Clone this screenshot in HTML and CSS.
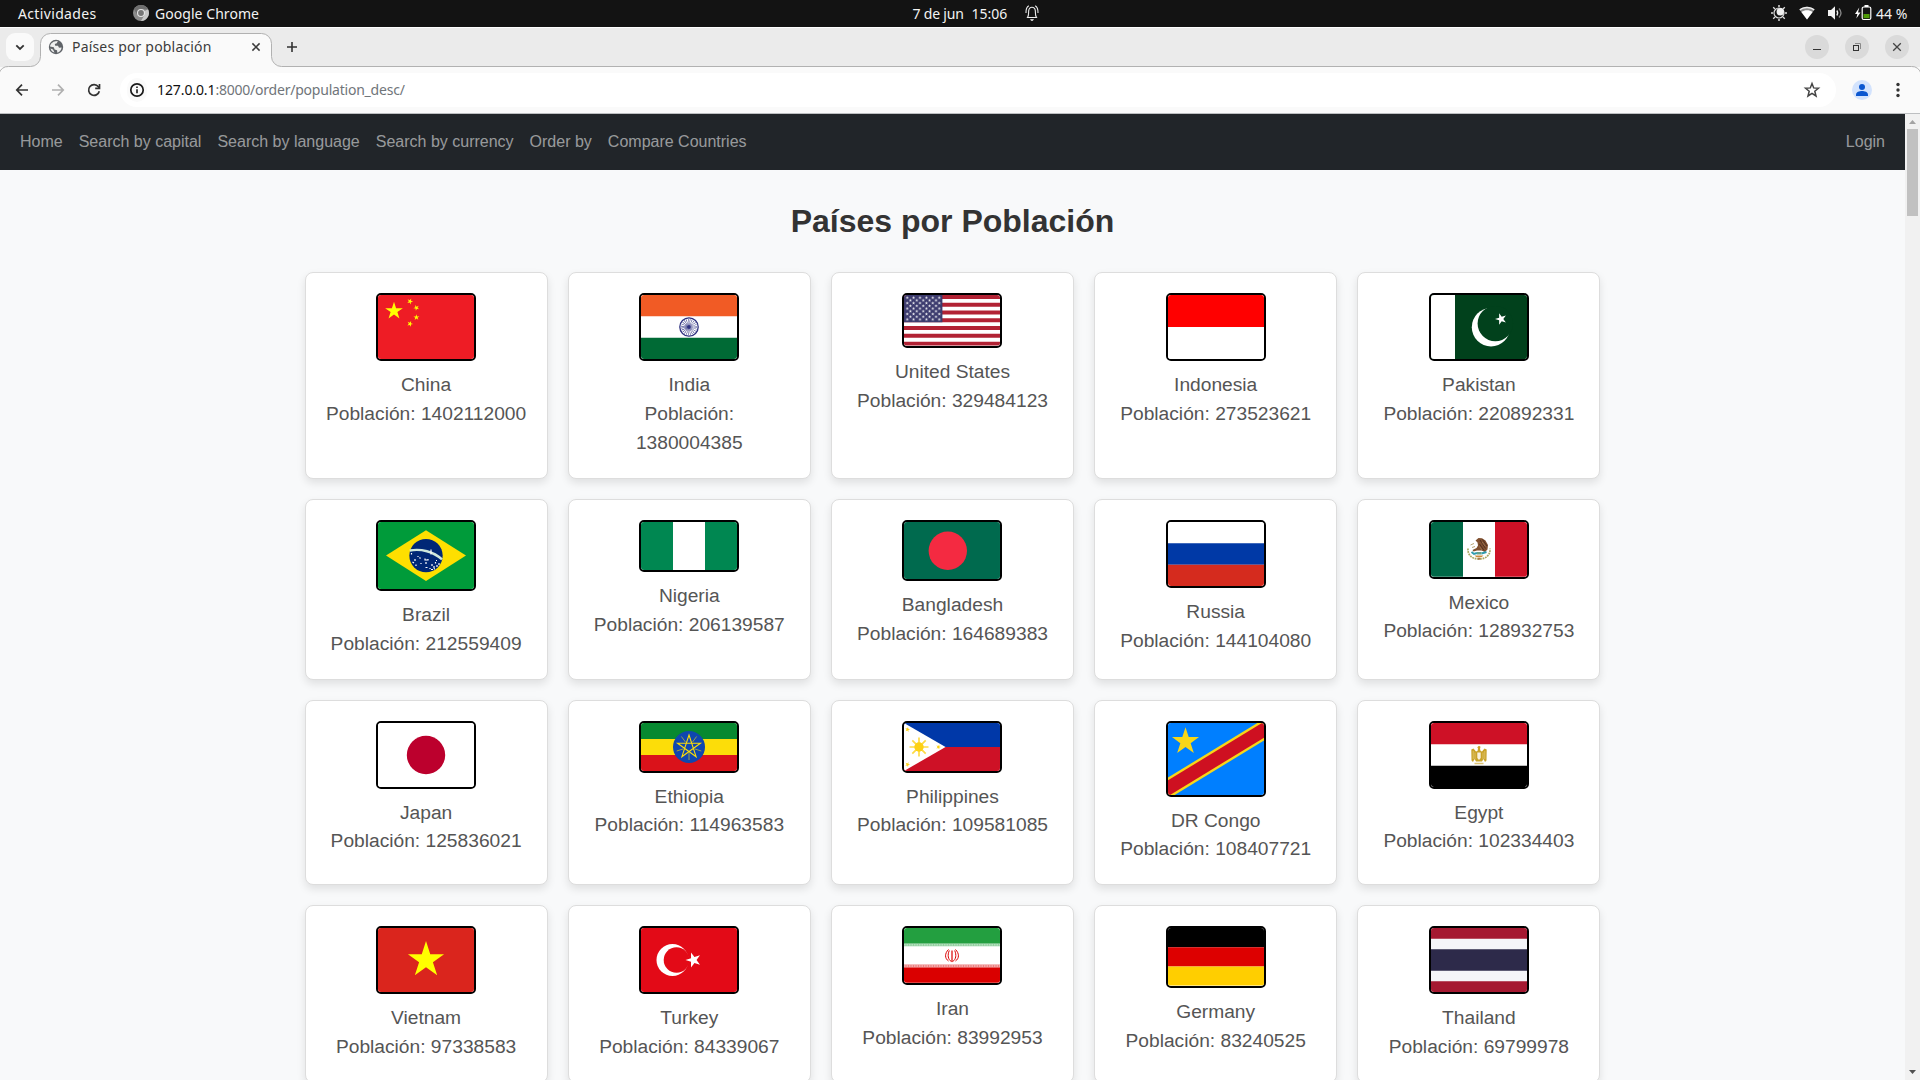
FILE: index.html
```html
<!DOCTYPE html>
<html lang="es">
<head>
<meta charset="utf-8">
<title>Países por población</title>
<link rel="stylesheet" href="styles.css">
</head>
<body>
<svg class="defs" width="0" height="0" aria-hidden="true">
  <defs>
    <polygon id="star" points="0,-10 2.245,-3.09 9.51,-3.09 3.633,1.18 5.878,8.09 0,3.82 -5.878,8.09 -3.633,1.18 -9.51,-3.09 -2.245,-3.09"/>
    <pattern id="usA" width="6.4" height="5.44" patternUnits="userSpaceOnUse"><use href="#star" fill="#fff" transform="translate(3.2 2.72) scale(.17)"/></pattern>
    <pattern id="usB" x="3.2" y="2.72" width="6.4" height="5.44" patternUnits="userSpaceOnUse"><use href="#star" fill="#fff" transform="translate(3.2 2.72) scale(.17)"/></pattern>
  </defs>
</svg>

<header class="topbar">
  <div class="topbar-left">
    <span class="t-act">Actividades</span>
    <svg class="chrome-icon" width="16" height="16" viewBox="0 0 16 16"><circle cx="8" cy="8" r="8" fill="#8c8c8c"/><path d="M8 8 15 4.200A8 8 0 0 1 8 16L11.500 10Z" fill="#c9c9c9"/><path d="M1 4.200A8 8 0 0 1 15 4.200H8L4.500 10Z" fill="#6f6f6f"/><circle cx="8" cy="8" r="4" fill="#e6e6e6"/><circle cx="8" cy="8" r="2.900" fill="#777"/></svg>
    <span class="t-app">Google Chrome</span>
  </div>
  <div class="topbar-mid">
    <span class="t-date">7 de jun</span><span class="t-time">15:06</span>
    <svg class="bell" width="14" height="16" viewBox="0 0 14 16" fill="none" stroke="#eee" stroke-width="1.100"><path d="M2.500 12.500C4 10.500 3.400 8 3.700 5.600 4 3.500 5.300 2.300 7 2.300S10 3.500 10.300 5.600C10.600 8 10 10.500 11.500 12.500Z"/><path d="M1 8C.8 4.500 1.800 2 3.800.7M13 8C13.200 4.500 12.200 2 10.200.7"/><path d="M5 14.200H9L7.800 15.700H6.200Z" fill="#fff" stroke="none"/></svg>
  </div>
  <div class="topbar-right">
    <svg width="16" height="16" viewBox="0 0 16 16"><circle cx="8" cy="8" r="5" fill="none" stroke="#ddd" stroke-width="1.200"/><circle cx="9.300" cy="6.700" r="3.700" fill="#f0f0f0"/><g fill="#aaa"><path d="M7 0h2v2H7zM7 14h2v2H7zM0 7h2v2H0zM14 7h2v2h-2z"/></g><path d="M2.200 2.200 4 4M12 12l1.800 1.800M13.800 2.200 12 4M4 12 2.200 13.800" stroke="#ddd" stroke-width="1.300"/></svg>
    <svg class="wifi" width="16" height="16" viewBox="0 0 16 16"><path d="M.4 4.500C4.800.9 11.200.9 15.600 4.500L8 14.500Z" fill="#8a8a8a"/><path d="M.4 4.500C4.800.9 11.200.9 15.600 4.500L14.800 5.600C10.800 2.500 5.200 2.500 1.200 5.600Z" fill="#eee"/><path d="M2.400 7C5.700 4.700 10.300 4.700 13.600 7L8 14.500Z" fill="#fff"/></svg>
    <svg class="vol" width="16" height="16" viewBox="0 0 16 16"><path d="M1 5h3l4-3.800v13.600L4 11H1z" fill="#f2f2f2"/><path d="M9.800 5.500Q11.600 8 9.800 10.500" stroke="#eee" fill="none" stroke-width="1.300"/><path d="M12 3.500Q16 8 12 12.500" stroke="#888" fill="none" stroke-width="1.300"/></svg>
    <svg class="batt" width="18" height="16" viewBox="0 0 18 16"><path d="M4.300 2.500 0 9h2.400L1.300 13.500 5.500 7.500H3z" fill="#fff"/><path d="M9.500 0h4v2h-4z" fill="#fff"/><rect x="7.200" y="2" width="8.600" height="12.500" rx="1.500" fill="none" stroke="#fff" stroke-width="1.200"/><rect x="8.500" y="9" width="6" height="4.200" fill="#4e9a06"/></svg>
    <span class="t-batt">44 %</span>
  </div>
</header>

<div class="tabstrip">
  <svg class="tab-outline" width="1920" height="50" viewBox="0 0 1920 50"><path d="M-1 52V47A9 9 0 0 1 8.500 39.500H30.500A10 10 0 0 0 40.500 29.500V16.500A10 10 0 0 1 50.500 6.500H261.500A10 10 0 0 1 271.500 16.500V29.500A10 10 0 0 0 281.500 39.500H1911.500A9 9 0 0 1 1921 47V52Z" fill="#fafafa" stroke="#b1b1b1"/></svg>
  <div class="tab-search"><svg width="28" height="28" viewBox="0 0 28 28"><path d="M10.300 12.300 14 16 17.700 12.300" fill="none" stroke="#333" stroke-width="1.800"/></svg></div>
  <div class="tab">
    <svg width="16" height="16" viewBox="0 0 16 16"><circle cx="8" cy="8" r="7.200" fill="#5f6368"/><path d="M7.500 2.200 9.800 2 8.800 4.200 6.800 5 7.200 6.800H10L11 8.800 13.600 8.500C13.500 10.800 11.800 13.300 9.300 13.800L9 11.200 6.600 10.500 5.800 8.300 2 7.500C2.300 5 4.700 2.500 7.500 2.200ZM2.500 9.500 5 10.500 6.500 13.600C4.500 13.200 3 11.500 2.500 9.500Z" fill="#fafafa" fill-opacity=".92"/></svg>
    <span class="t-tab">Países por población</span>
    <svg class="tab-close" width="10" height="10" viewBox="0 0 10 10"><path d="M1.400 1.400 8.600 8.600M8.600 1.400 1.400 8.600" stroke="#3c3c3c" stroke-width="1.500"/></svg>
  </div>
  <svg class="new-tab" width="12" height="12" viewBox="0 0 12 12"><path d="M6 1V11M1 6H11" stroke="#333" stroke-width="1.600"/></svg>
  <div class="winbtns">
    <span class="winbtn"><svg width="24" height="24" viewBox="0 0 24 24"><path d="M8 14.500h8" stroke="#333"/></svg></span>
    <span class="winbtn"><svg width="24" height="24" viewBox="0 0 24 24" fill="none"><path d="M10 8.500H15.500V14" stroke="#8a8a8a"/><rect x="8.500" y="10.500" width="5" height="5" stroke="#333"/></svg></span>
    <span class="winbtn"><svg width="24" height="24" viewBox="0 0 24 24"><path d="M8.200 8.200 15.800 15.800M15.800 8.200 8.200 15.800" stroke="#444" stroke-width="1.300"/></svg></span>
  </div>
</div>

<div class="toolbar">
  <svg class="tb-back" width="14" height="14" viewBox="0 0 14 14" fill="none" stroke="#333" stroke-width="1.700"><path d="M13 7H2M7 1.700 1.800 7 7 12.300"/></svg>
  <svg class="tb-fwd" width="14" height="14" viewBox="0 0 14 14" fill="none" stroke="#b0b0b0" stroke-width="1.700"><path d="M1 7H12M7 1.700 12.200 7 7 12.300"/></svg>
  <svg class="tb-reload" width="14" height="14" viewBox="0 0 14 14" fill="none" stroke="#333" stroke-width="1.700"><path d="M12.300 8.200A5.400 5.400 0 1 1 11.400 3.800L12.300 5"/><path d="M12.500 1V5.300H8.200"/></svg>
  <div class="omnibox">
    <span class="site-info"><svg width="16" height="16" viewBox="0 0 16 16"><circle cx="8" cy="8" r="6.200" fill="none" stroke="#1a1a1a" stroke-width="1.700"/><path d="M8 7.200V11.300" stroke="#1a1a1a" stroke-width="1.600"/><path d="M7.200 4.500h1.600v1.600H7.200z" fill="#1a1a1a"/></svg></span>
    <span class="url"><b>127.0.0.1</b>:8000/order/population_desc/</span>
    <svg class="bookmark" width="18" height="18" viewBox="0 0 18 18"><path d="M9 2.500 10.700 6.900 15.500 7.200 11.800 10.300 13 15 9 12.400 5 15 6.200 10.300 2.500 7.200 7.300 6.900Z" fill="none" stroke="#444" stroke-width="1.500"/></svg>
  </div>
  <svg class="profile" width="20" height="20" viewBox="0 0 20 20"><circle cx="10" cy="10" r="10" fill="#d3e3fd"/><circle cx="10" cy="7" r="3" fill="#0b57d0"/><path d="M4 16V14.500C4 12 7.500 11 10 11S16 12 16 14.500V16Z" fill="#0b57d0"/></svg>
  <svg class="menu-dots" width="4" height="16" viewBox="0 0 4 16" fill="#333"><circle cx="2" cy="2.500" r="1.700"/><circle cx="2" cy="8" r="1.700"/><circle cx="2" cy="13.500" r="1.700"/></svg>
</div>

<div class="viewport">
  <main class="page">
    <nav class="navbar">
      <a>Home</a><a>Search by capital</a><a>Search by language</a><a>Search by currency</a><a>Order by</a><a>Compare Countries</a><a class="login">Login</a>
    </nav>
    <h1>Países por Población</h1>
    <div class="grid">
      <div class="card"><div class="flag"><svg viewBox="0 0 96 64"><path fill="#ee1c25" d="M0 0h96v64H0z"/><g fill="#ff0"><use href="#star" transform="translate(16 16) scale(.93)"/><use href="#star" transform="translate(32 6.400) rotate(23) scale(.31)"/><use href="#star" transform="translate(38.400 12.800) rotate(46) scale(.31)"/><use href="#star" transform="translate(38.400 22.400) rotate(70) scale(.31)"/><use href="#star" transform="translate(32 28.800) rotate(21) scale(.31)"/></g></svg></div><p>China<br>Población: 1402112000</p></div>
      <div class="card"><div class="flag"><svg viewBox="0 0 96 64"><path fill="#fff" d="M0 0h96v64H0z"/><path fill="#f15b25" d="M0 0h96v21.330H0z"/><path fill="#006a35" d="M0 42.670h96V64H0z"/><circle cx="48" cy="32" r="9.200" fill="#fff" stroke="#2e3180" stroke-width="1.300"/><circle cx="48" cy="32" r="4.500" fill="none" stroke="#2e3180" stroke-width="7" stroke-dasharray=".35 .828"/><circle cx="48" cy="32" r="3.800" fill="#2e3180" fill-opacity=".35"/><circle cx="48" cy="32" r="1.900" fill="#2e3180"/></svg></div><p>India<br>Población: 1380004385</p></div>
      <div class="card"><div class="flag"><svg viewBox="0 0 96 50.530"><path fill="#fff" d="M0 0h96v50.530H0z"/><path d="M0 1.940H96M0 9.720H96M0 17.490H96M0 25.260H96M0 33.040H96M0 40.810H96M0 48.590H96" stroke="#b22234" stroke-width="3.887"/><path fill="#3c3b6e" d="M0 0h38.400v27.200H0z"/><path fill="url(#usA)" d="M0 0h38.400v27.200H0z"/><path fill="url(#usB)" d="M3.200 2.720h32v21.760h-32z"/></svg></div><p>United States<br>Población: 329484123</p></div>
      <div class="card"><div class="flag"><svg viewBox="0 0 96 64"><path fill="#fff" d="M0 0h96v64H0z"/><path fill="red" d="M0 0h96v32H0z"/></svg></div><p>Indonesia<br>Población: 273523621</p></div>
      <div class="card"><div class="flag"><svg viewBox="0 0 96 64"><path fill="#01411c" d="M0 0h96v64H0z"/><path fill="#fff" d="M0 0h24v64H0z"/><circle cx="60" cy="32.200" r="19.200" fill="#fff"/><circle cx="64.300" cy="28.600" r="17.700" fill="#01411c"/><use href="#star" fill="#fff" transform="translate(70 24) rotate(-18) scale(.6)"/></svg></div><p>Pakistan<br>Población: 220892331</p></div>

      <div class="card"><div class="flag"><svg viewBox="0 0 96 67.200"><path fill="#009b3a" d="M0 0h96v67.200H0z"/><path fill="#fedf00" d="M8 33.600 48 8.200 88 33.600 48 59Z"/><circle cx="48" cy="33.600" r="16.700" fill="#002776"/><path d="M31.800 28.500C43 26.500 55.500 29.500 64 37.500" fill="none" stroke="#cfe8dc" stroke-width="2.400"/><path d="M53 27.500v5M33.500 31v1.500M40 34v1M37 37v2M34.500 40l1.500 1M38 42.500v1.500M41.500 35.500l1 1M47 36.500v2M50 37v1.500M48 40v2M46.500 38h3M43 41v1M47.500 45.500h2M52 46v1M54 42v2M56 44v2.500M57.500 40v1.500M59 43v2M61 41v2M53 47.500h2M58 38.500h1M56 47h1" stroke="#fff" stroke-width="1.200"/></svg></div><p>Brazil<br>Población: 212559409</p></div>
      <div class="card"><div class="flag"><svg viewBox="0 0 96 48"><path fill="#008751" d="M0 0h96v48H0z"/><path fill="#fff" d="M32 0h32v48H32z"/></svg></div><p>Nigeria<br>Población: 206139587</p></div>
      <div class="card"><div class="flag"><svg viewBox="0 0 96 57.600"><path fill="#006a4e" d="M0 0h96v57.600H0z"/><circle cx="43.800" cy="28.800" r="19.200" fill="#f42a41"/></svg></div><p>Bangladesh<br>Población: 164689383</p></div>
      <div class="card"><div class="flag"><svg viewBox="0 0 96 64"><path fill="#fff" d="M0 0h96v64H0z"/><path fill="#0039a6" d="M0 21.330h96v21.340H0z"/><path fill="#d52b1e" d="M0 42.670h96V64H0z"/></svg></div><p>Russia<br>Población: 144104080</p></div>
      <div class="card"><div class="flag"><svg viewBox="0 0 96 54.860"><path fill="#fff" d="M0 0h96v54.860H0z"/><path fill="#006847" d="M0 0h32v54.860H0z"/><path fill="#ce1126" d="M64 0h32v54.860H64z"/><path d="M37 26.500C36.500 33 41 37 48 37S59.500 33 59 26.500" fill="none" stroke="#a9a760" stroke-width="1.700" stroke-dasharray="1.800 .8"/><path d="M44.500 18.500 47.500 16 51 16.200 54.500 18.500 57 23 56.500 27.500 54 30 50.500 28.500 46 28.500 42.500 29.500 41.500 28 45.500 26 47 23.500 46.500 20.500Z" fill="#80502f"/><path d="M49 18 54.500 26.500M51.500 17.500 56 24M48.500 22 53 28.500" stroke="#42261a" stroke-width=".8"/><path d="M51 20 54.500 24.500M48.500 24.500 51 28" stroke="#b48a62" stroke-width=".6"/><path d="M39.500 23 43 21.500M41 25.500l3-1" stroke="#b9a675" stroke-width="1"/><path d="M40.500 30 43 32 46 31M50.500 31.500 55.500 30" fill="none" stroke="#2f9cae" stroke-width="2"/><path d="M46 30h4.500v2.500H46z" fill="#63a08b"/><path d="M43.500 33.500h9l-2 1.700h-5z" fill="#c98a3c"/><path d="M46.800 35.700h2.400v2h-2.400z" fill="#a6794a"/></svg></div><p>Mexico<br>Población: 128932753</p></div>

      <div class="card"><div class="flag"><svg viewBox="0 0 96 64"><path fill="#fff" d="M0 0h96v64H0z"/><circle cx="48" cy="32" r="19.200" fill="#bc002d"/></svg></div><p>Japan<br>Población: 125836021</p></div>
      <div class="card"><div class="flag"><svg viewBox="0 0 96 48"><path fill="#078930" d="M0 0h96v16H0z"/><path fill="#fcdd09" d="M0 16h96v16H0z"/><path fill="#da121a" d="M0 32h96v16H0z"/><circle cx="48" cy="24" r="16" fill="#0f47af"/><path d="M48 12 55.100 33.700 36.600 20.300H59.400L40.900 33.700Z" fill="none" stroke="#fcdd09" stroke-width="1.100"/><path d="M51.500 19.100 55.600 13.500M53.700 25.900 60.300 28M48 30V37M42.300 25.900 35.700 28M44.500 19.100 40.400 13.500" stroke="#fcdd09" stroke-opacity=".65" stroke-width=".9"/></svg></div><p>Ethiopia<br>Población: 114963583</p></div>
      <div class="card"><div class="flag"><svg viewBox="0 0 96 48"><path fill="#0038a8" d="M0 0h96v24H0z"/><path fill="#ce1126" d="M0 24h96v24H0z"/><path fill="#fff" d="M0 0 41.570 24 0 48Z"/><g fill="#fcd116" stroke="#fcd116"><circle cx="15" cy="24" r="4.700" stroke="none"/><path d="M15 14.500V33.500M5.500 24H24.500M8.300 17.300 21.700 30.700M21.700 17.300 8.300 30.700" stroke-width="1.700" stroke-opacity=".8"/><g stroke="none"><use href="#star" transform="translate(3.500 6.500) rotate(12) scale(.26)"/><use href="#star" transform="translate(34.500 24) rotate(90) scale(.26)"/><use href="#star" transform="translate(3.500 41.500) rotate(24) scale(.26)"/></g></g></svg></div><p>Philippines<br>Población: 109581085</p></div>
      <div class="card"><div class="flag"><svg viewBox="0 0 96 72"><path fill="#007fff" d="M0 0h96v72H0z"/><path d="M-10 71.400 106 .6" stroke="#f7d618" stroke-width="18.400"/><path d="M-10 71.400 106 .6" stroke="#ce1021" stroke-width="13.600"/><use href="#star" fill="#f7d618" transform="translate(17.500 18.500) scale(1.420)"/></svg></div><p>DR Congo<br>Población: 108407721</p></div>
      <div class="card"><div class="flag"><svg viewBox="0 0 96 64"><path fill="#fff" d="M0 0h96v64H0z"/><path fill="#ce1126" d="M0 0h96v21.330H0z"/><path d="M0 42.670h96V64H0z"/><path d="M40.300 26.500 42.500 25.500 45 28.500 46.500 28 47 25.500 46.300 24.300 48 22.700 49.500 23.800 49 26 49.700 28 51 28.500 53.500 25.500 55.700 26.500 55.500 37.500 54 39 52.500 36 51 38.500H45L43.500 36 42 39 40.500 37.500Z" fill="#c9a227"/><path d="M42.200 28v8M44 29.500v7M52 29.500v7M53.800 28v8" stroke="#e9d48c" stroke-width=".6"/><path d="M46.300 29.500h3.400v5.500l-1.700 2-1.700-2z" fill="#f8f0dc"/><path d="M43.500 39.700h9v1.600h-9z" fill="#dcc274"/></svg></div><p>Egypt<br>Población: 102334403</p></div>

      <div class="card"><div class="flag"><svg viewBox="0 0 96 64"><path fill="#da251d" d="M0 0h96v64H0z"/><use href="#star" fill="#ff0" transform="translate(48 32) scale(1.900)"/></svg></div><p>Vietnam<br>Población: 97338583</p></div>
      <div class="card"><div class="flag"><svg viewBox="0 0 96 64"><path fill="#e30a17" d="M0 0h96v64H0z"/><circle cx="31.500" cy="32" r="16" fill="#fff"/><circle cx="35.500" cy="32" r="12.800" fill="#e30a17"/><use href="#star" fill="#fff" transform="translate(52.500 32) rotate(-18) scale(.8)"/></svg></div><p>Turkey<br>Población: 84339067</p></div>
      <div class="card"><div class="flag"><svg viewBox="0 0 96 54.860"><path fill="#fff" d="M0 0h96v54.860H0z"/><path fill="#239f40" d="M0 0h96v15.500H0z"/><path fill="#da0000" d="M0 39.400h96v15.460H0z"/><path d="M0 16.900H96" stroke="#239f40" stroke-opacity=".5" stroke-width="2.800"/><path d="M0 16.900H96" stroke="#fff" stroke-opacity=".45" stroke-width="1.400" stroke-dasharray="1.500 1"/><path d="M0 38H96" stroke="#da0000" stroke-opacity=".5" stroke-width="2.800"/><path d="M0 38H96" stroke="#fff" stroke-opacity=".45" stroke-width="1.400" stroke-dasharray="1.500 1"/><g fill="none" stroke="#da0000" stroke-width="1"><path d="M44.500 21.500C40.500 25.500 40.700 30.500 44.500 33M51.500 21.500C55.500 25.500 55.300 30.500 51.500 33M45.300 22.500C43.300 27 44 31.500 47.300 33.500M50.700 22.500C52.700 27 52 31.500 48.700 33.500"/><path d="M48 22.500V34" stroke-width="1.200"/></g></svg></div><p>Iran<br>Población: 83992953</p></div>
      <div class="card"><div class="flag"><svg viewBox="0 0 96 57.600"><path d="M0 0h96v19.200H0z"/><path fill="#d00" d="M0 19.200h96v19.200H0z"/><path fill="#ffce00" d="M0 38.400h96v19.200H0z"/></svg></div><p>Germany<br>Población: 83240525</p></div>
      <div class="card"><div class="flag"><svg viewBox="0 0 96 64"><path fill="#a51931" d="M0 0h96v64H0z"/><path fill="#f4f5f8" d="M0 10.670h96v42.660H0z"/><path fill="#2d2a4a" d="M0 21.330h96v21.340H0z"/></svg></div><p>Thailand<br>Población: 69799978</p></div>
    </div>
  </main>
  <div class="scrollbar">
    <svg width="15" height="15" viewBox="0 0 15 15"><path d="M4 10 7.500 6 11 10Z" fill="#a3a3a3"/></svg>
    <div class="thumb"></div>
    <svg class="down" width="15" height="15" viewBox="0 0 15 15"><path d="M4 5 7.500 9 11 5Z" fill="#505050"/></svg>
  </div>
</div>
</body>
</html>
```
FILE: styles.css
```css
* { box-sizing: border-box; }
body { margin: 0; width: 1920px; height: 1080px; overflow: hidden; font-family: "Liberation Sans", Arial, sans-serif; background: #fafafa; }
svg { display: block; flex: none; }
.defs { position: absolute; }

.topbar { display: grid; grid-template-columns: 1fr auto 1fr; height: 27px; background: #131313; color: #f2f2f2; font: 14px/27px "Noto Sans", sans-serif; white-space: nowrap; }
.topbar > div { display: flex; align-items: center; height: 26px; }
.topbar-left { padding-left: 18px; }
.t-act { width: 79px; letter-spacing: .35px; }
.chrome-icon { margin: 0 6px 0 36px; }
.t-app { letter-spacing: .05px; }
.topbar-mid { padding-left: 31px; }
.t-date { width: 59px; letter-spacing: -.2px; }
.t-time { width: 36px; }
.bell { margin: -1px 0 0 17px; }
.topbar-right { justify-content: flex-end; padding-right: 12px; }
.wifi { margin-left: 12px; }
.vol { margin-left: 12px; }
.batt { margin: 0 3px 0 12px; }
.t-batt { width: 32px; }

.tabstrip { position: relative; display: flex; height: 40px; padding: 6px 11px 0 6px; background: #ebebeb; border-top: 1px solid #fdfdfd; }
.tab-outline { position: absolute; left: 0; top: -1px; }
.tabstrip > div, .new-tab { position: relative; }
.tab-search { width: 28px; height: 28px; margin-top: -1px; border-radius: 9px; background: #fafafa; }
.tab { display: flex; align-items: center; width: 231px; height: 26px; margin-left: 6px; padding: 0 10px 0 8px; font: 14px/26px "Noto Sans", sans-serif; color: #3c3c3c; white-space: nowrap; }
.t-tab { margin-left: 8px; letter-spacing: .18px; }
.tab-close { margin-left: auto; }
.new-tab { margin: 7px 0 0 15px; }
.winbtns { display: flex; gap: 16px; margin: 1px 0 0 auto; }
.winbtn { width: 24px; height: 24px; border-radius: 50%; background: #dadada; }

.toolbar { position: relative; display: flex; align-items: center; height: 47px; padding: 0 20px 0 15px; border-bottom: 1px solid #bdbfc1; }
.tb-fwd { margin-left: 22px; }
.tb-reload { margin-left: 22px; }
.omnibox { display: flex; align-items: center; width: 1716px; height: 34px; margin-left: 19px; padding: 0 15px 0 7px; border-radius: 17px; background: #fff; }
.site-info { display: grid; place-items: center; width: 20px; height: 24px; border-radius: 12px; background: #fafafa; }
.url { margin-left: 10px; font: 14px/34px "Noto Sans", sans-serif; letter-spacing: -.22px; color: #70757a; white-space: nowrap; }
.url b { font-weight: 400; color: #111; letter-spacing: -.1px; }
.bookmark { margin-left: auto; }
.profile { margin-left: 16px; }
.menu-dots { margin-left: 24px; }

.viewport { display: flex; height: 966px; overflow: hidden; }
.page { width: 1905px; background: #f8f9fa; }
.navbar { display: flex; align-items: center; height: 56px; padding: 0 12px; background: #212529; }
.navbar a { padding: 0 8px; font-size: 16px; line-height: 24px; color: rgba(255, 255, 255, .55); }
.navbar .login { margin-left: auto; }
h1 { margin: 32px 0; font-size: 32px; line-height: 38.4px; font-weight: 700; text-align: center; color: #333; }
.grid { display: grid; grid-template-columns: repeat(5, 1fr); gap: 20px; width: 1296px; margin: 0 auto; }
.card { padding: 20px; border: 1px solid #ddd; border-radius: 8px; background: #fff; box-shadow: 0 4px 8px rgba(0, 0, 0, .1); text-align: center; }
.flag { width: 100px; margin: 0 auto 10px; border: 2px solid #000; border-radius: 5px; overflow: hidden; }
.flag svg { width: 96px; height: auto; }
.card p { margin: 0; font-size: 19.2px; line-height: 28.8px; color: #555; }

.scrollbar { display: flex; flex-direction: column; width: 15px; height: 966px; background: #f1f1f1; }
.thumb { width: 11px; height: 87px; margin-left: 2px; background: #c1c1c1; }
.down { margin-top: auto; }
```
